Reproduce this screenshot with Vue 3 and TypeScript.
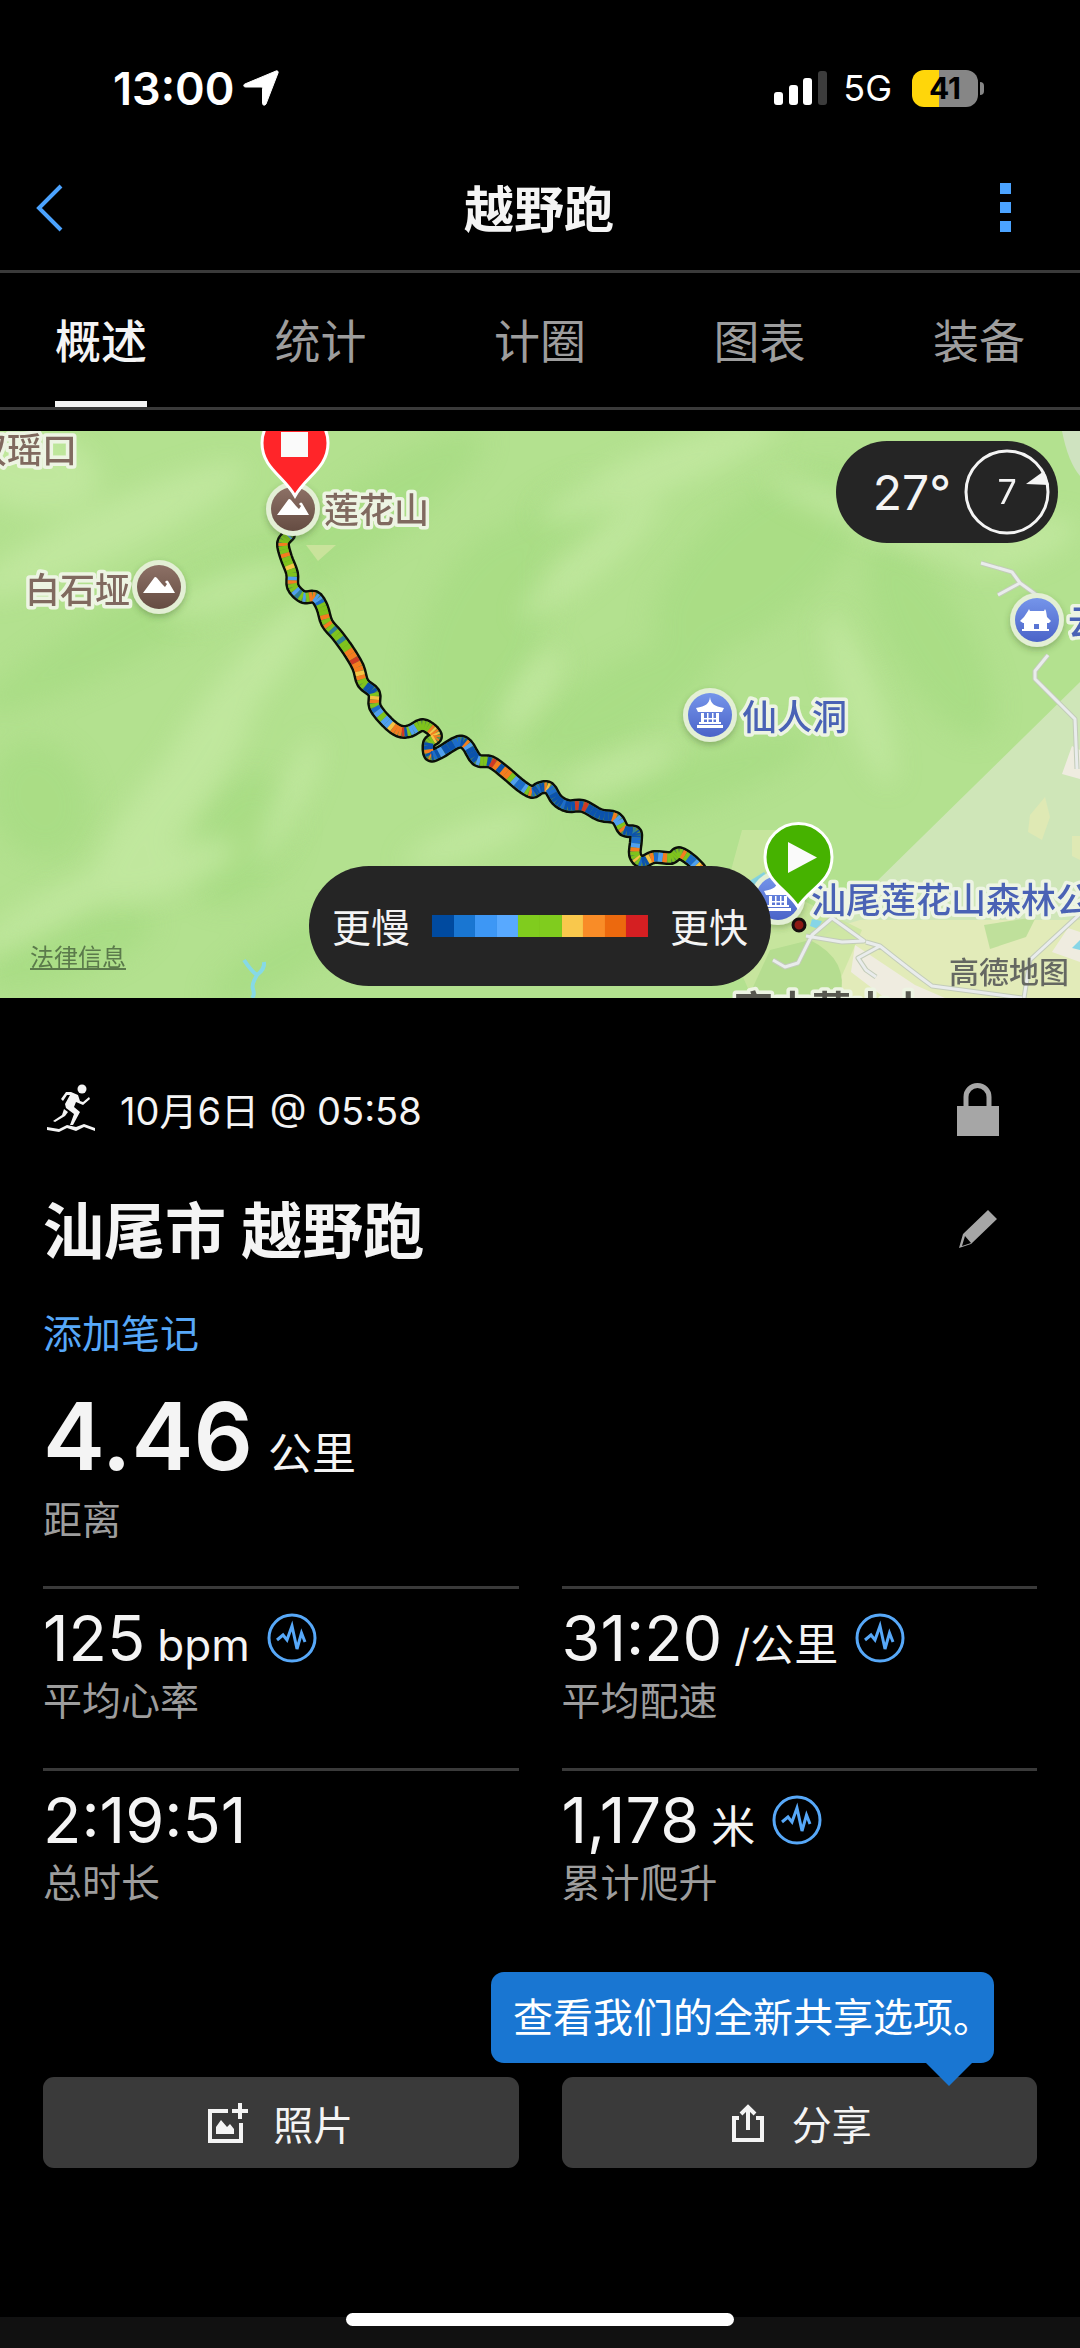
<script setup lang="ts">
import { ref } from 'vue'

interface Stat {
  value: string
  unit?: string
  label: string
  chart: boolean
}

type Point = [number, number]

const tabs = ['概述', '统计', '计圈', '图表', '装备']
const activeTab = ref('概述')

const stats: Stat[] = [
  { value: '125', unit: 'bpm', label: '平均心率', chart: true },
  { value: '31:20', unit: '/公里', label: '平均配速', chart: true },
  { value: '2:19:51', label: '总时长', chart: false },
  { value: '1,178', unit: '米', label: '累计爬升', chart: true },
]

const paceScale = [
  '#004a9f', '#1976d2', '#3d97f5', '#58a9ff', '#80cc1e',
  '#80cc1e', '#f9c84c', '#f98c27', '#ec690e', '#d51f22',
]

const route: Point[] = [
  [289, 535], [283, 543], [286, 557], [292, 573], [293, 587], [303, 597], [315, 597], [322, 607],
  [327, 623], [337, 635], [348, 650], [358, 667], [363, 683], [374, 693], [375, 707], [387, 722],
  [399, 731], [410, 731], [422, 725], [432, 730], [436, 737], [429, 743], [430, 755], [439, 753],
  [458, 742], [467, 745], [477, 760], [491, 762], [506, 773], [520, 785], [532, 792], [540, 788],
  [549, 788], [557, 800], [568, 806], [583, 806], [600, 815], [616, 818], [624, 830], [635, 832],
  [636, 840], [635, 855], [642, 862], [654, 857], [671, 858], [679, 853], [691, 860], [700, 869],
]

const palette: Record<string, string> = {
  g: '#7fc31c', l: '#4f9ff0', b: '#0b52ad', o: '#f57c1f', y: '#f6c343', r: '#cf3a24', t: '#2f7f9a', m: '#1c6ccb',
}

// Four pace samples for each stretch between two route points.
const pace = [
  'lggg', 'oggo', 'ggyg', 'glog', 'gltg', 'lgoo', 'llmg', 'ggog',
  'ogtg', 'gtgg', 'ooro', 'oyog', 'gbbb', 'gyog', 'mlgl', 'lyoo',
  'orbg', 'llgg', 'gggo', 'yoyo', 'oygg', 'bbob', 'obmb', 'lbbm',
  'mbbo', 'lbbb', 'lggb', 'robo', 'oglm', 'mlgo', 'mbbm', 'bboy',
  'mmbb', 'bbmb', 'bbrb', 'rbbb', 'bbbo', 'llgo', 'bbbt', 'bbbm',
  'mlog', 'gygm', 'bbyo', 'mlog', 'gggg', 'gogm', 'mlyo', 'oygg',
]

function curve(a: number, b: number, c: number, d: number, t: number): number {
  return 0.5 * (2 * b + (c - a) * t + (2 * a - 5 * b + 4 * c - d) * t * t + (3 * b - a - 3 * c + d) * t * t * t)
}

const track: Point[] = []
const colors: string[] = []
for (let i = 0; i < route.length - 1; i++) {
  const p0 = route[Math.max(i - 1, 0)]
  const p1 = route[i]
  const p2 = route[i + 1]
  const p3 = route[Math.min(i + 2, route.length - 1)]
  for (let k = 0; k < 4; k++) {
    const t = k / 4
    track.push([curve(p0[0], p1[0], p2[0], p3[0], t), curve(p0[1], p1[1], p2[1], p3[1], t)])
    colors.push(palette[pace[i][k]])
  }
}
track.push(route[route.length - 1])

const routePoints = track.map((p) => p.join(',')).join(' ')
const segments = track.slice(1).map((end, i) => ({
  x1: track[i][0], y1: track[i][1], x2: end[0], y2: end[1], color: colors[i],
}))

const darkPatches = [
  [360, 520, 150, 34, -35], [150, 620, 190, 30, -28], [480, 640, 120, 60, -70], [760, 560, 130, 60, -40],
  [620, 700, 110, 36, -30], [70, 950, 90, 28, -20], [240, 840, 70, 50, -60], [930, 640, 110, 40, 60],
  [560, 520, 60, 30, -30], [700, 780, 120, 26, -20], [40, 800, 60, 50, 70], [280, 960, 80, 24, -30],
]
const lightPatches = [
  [110, 530, 150, 26, -25], [30, 470, 70, 40, 10], [660, 470, 130, 22, -22], [240, 690, 120, 22, -50],
  [170, 800, 130, 30, -52], [60, 905, 100, 16, -28], [170, 870, 70, 22, -20], [530, 690, 50, 16, -55],
  [590, 560, 90, 16, -40], [880, 520, 120, 16, 20], [860, 700, 90, 18, 70], [620, 770, 60, 14, -20],
  [290, 800, 70, 14, -65], [470, 840, 70, 16, -20], [1020, 545, 60, 20, -20], [230, 590, 70, 18, -20],
]
</script>

<template>
  <div class="screen">
    <div class="status">
      <div class="status-left">
        <span class="clock">13:00</span>
        <svg class="locator" viewBox="0 0 36 36" aria-hidden="true">
          <path d="M33 1c1.500-.6 2.600.6 2 2L23 34c-.8 1.800-3.500 1.400-3.500-.5V18.500c0-1-.6-1.500-1.500-1.500H2.500c-2 0-2.400-2.200-.6-3z" fill="#fff" stroke="#fff" stroke-linejoin="round" />
        </svg>
      </div>
      <div class="status-right">
        <svg class="signal" viewBox="0 0 53 34" aria-hidden="true">
          <rect x="0" y="21" width="9" height="13" rx="3" fill="#fff" />
          <rect x="15" y="14" width="9" height="20" rx="3" fill="#fff" />
          <rect x="29" y="7" width="9" height="27" rx="3" fill="#fff" />
          <rect x="44" y="0" width="9" height="34" rx="3" fill="#3c3c3c" />
        </svg>
        <span class="network">5G</span>
        <div class="battery"><span>41</span></div>
      </div>
    </div>

    <header class="bar">
      <button class="icon-btn" aria-label="返回">
        <svg width="28" height="48" viewBox="0 0 28 48"><path d="M25 2 3 24l22 22" fill="none" stroke="#4ba3ff" stroke-width="4" /></svg>
      </button>
      <h1>越野跑</h1>
      <button class="icon-btn" aria-label="更多">
        <svg width="11" height="50" viewBox="0 0 11 50" fill="#4ba3ff">
          <rect width="11" height="11" /><rect y="19" width="11" height="11" /><rect y="38" width="11" height="11" />
        </svg>
      </button>
    </header>

    <nav class="tabs">
      <button
        v-for="tab in tabs"
        :key="tab"
        :class="['tab', { active: tab === activeTab }]"
        @click="activeTab = tab"
      >{{ tab }}</button>
    </nav>

    <section class="map">
      <svg class="map-canvas" viewBox="0 431 1080 567" preserveAspectRatio="xMidYMid slice">
        <defs>
          <filter id="soft" x="-30%" y="-60%" width="160%" height="220%"><feGaussianBlur stdDeviation="13" /></filter>
          <filter id="shade" x="-30%" y="-30%" width="160%" height="170%">
            <feDropShadow dx="0" dy="3" stdDeviation="3" flood-color="#3d5a2c" flood-opacity="0.35" />
          </filter>
          <linearGradient id="brown" x1="0" y1="0" x2="0" y2="1"><stop stop-color="#8d7166" /><stop offset="1" stop-color="#654c42" /></linearGradient>
          <linearGradient id="blue" x1="0" y1="0" x2="0" y2="1"><stop stop-color="#7595ea" /><stop offset="1" stop-color="#4a63c8" /></linearGradient>
          <g id="peak">
            <circle r="27" fill="#e3efd5" filter="url(#shade)" />
            <circle r="22" fill="url(#brown)" />
            <path d="M-16 6-5-9q1-2 3 0L3-3 6 0l2-3-2-2 1-1q1-1 2 0L16 6z" fill="#fff" />
          </g>
          <g id="badge">
            <circle r="27" fill="#e3efd5" filter="url(#shade)" />
            <circle r="22" fill="url(#blue)" />
          </g>
          <g id="pagoda" fill="#fff">
            <path d="M0-17c1 7 4 9 14 11l-2 4h-24l-2-4c10-2 13-4 14-11z" />
            <path d="M-9-1h3V9h-3zM6-1h3V9H6zM-3-1h1.500V9H-3zM2-1h1.500V9H2zM-8 4H8v1.500H-8zM-11 8h22v2h-22zM-13 11h26v3h-26z" />
          </g>
        </defs>

        <rect y="431" width="1080" height="567" fill="#b3e18f" />
        <g filter="url(#soft)" fill="#a6db82" opacity="0.7">
          <ellipse v-for="(p, i) in darkPatches" :key="i" :rx="p[2]" :ry="p[3]" :transform="`translate(${p[0]} ${p[1]}) rotate(${p[4]})`" />
        </g>
        <g filter="url(#soft)" fill="#c6eaa4" opacity="0.7">
          <ellipse v-for="(p, i) in lightPatches" :key="i" :rx="p[2]" :ry="p[3]" :transform="`translate(${p[0]} ${p[1]}) rotate(${p[4]})`" />
        </g>

        <path d="M1080 682 870 888l-130 110h340z" fill="#cfe6b8" />
        <path d="M860 920h220v78H800q-10-60 60-78z" fill="#e2ebb9" />
        <path d="M742 830h40l20 70 60 30-30 68h-80l-34-80z" fill="#cbe6a0" opacity="0.8" />
        <path d="M770 950l40-10q40 20 30 58h-92z" fill="#b5dd90" />
        <path d="M984 925l52-8-10 20-36 12z" fill="#bfe09b" />
        <path d="M1062 431h18v45q-12-14-18-45z" fill="#cfe3c0" />
        <path d="M306 545h30l-18 16z" fill="#c9e39b" />
        <path d="M1072 746l8 4v29l-18-5zM855 945l60 40 30 13h-60l-34-26zM1068 928l12 4v30l-28-10z" fill="#efece0" />
        <path d="M1030 815l15-18 5 20-8 23-14-8zM1072 836h8v24l-8-4z" fill="#dfe9b4" />
        <path d="M748 882l16-10 4 6-12 10zM812 919l10 2-4 8-8-3zM1072 948l8-8v10z" fill="#86d5e6" />
        <path d="M244 960q8 12 13 15 8-6 7-13M257 975q-6 10-4 14 2 6-1 9" fill="none" stroke="#86d9e6" stroke-width="4" />

        <g fill="none" stroke="#c3ccb9" stroke-linejoin="round" stroke-width="5">
          <path d="M981 563l31 9 8 11 18 13M1020 583l-22 12M1048 655l-13 16v8l40 40 2 50M806 936l36 6 22-1-32-23-20 17-14 28-13 4-12-7M866 942l14 4q30 24 52 40l90 12M880 946l-22 12 8 12 10 7M1080 914l-50 46-6 38" />
        </g>
        <g fill="none" stroke="#e9ecec" stroke-linejoin="round" stroke-width="3">
          <path d="M981 563l31 9 8 11 18 13M1020 583l-22 12M1048 655l-13 16v8l40 40 2 50M806 936l36 6 22-1-32-23-20 17-14 28-13 4-12-7M866 942l14 4q30 24 52 40l90 12M880 946l-22 12 8 12 10 7M1080 914l-50 46-6 38" />
        </g>

        <g fill="none" stroke-linejoin="round" stroke-linecap="round">
          <polyline :points="routePoints" stroke="#0b0f08" stroke-width="14" />
          <polyline :points="routePoints" stroke="#5c8f4a" stroke-width="9" />
        </g>
        <g stroke-width="9">
          <line v-for="(s, i) in segments" :key="i" :x1="s.x1" :y1="s.y1" :x2="s.x2" :y2="s.y2" :stroke="s.color" />
        </g>

        <use href="#peak" x="293" y="509" />
        <use href="#peak" x="159" y="587" />
        <use href="#badge" x="710" y="715" /><use href="#pagoda" x="710" y="714" />
        <use href="#badge" x="1037" y="620" />
        <path d="M1028 611l1-2 1 2h14l1-2 1 2 1 6 4 4-2 2h-2v6h2v2h-27v-2h2v-6h-1l-3-2 4-4zM1034 624v5h5v-5z" fill="#fff" fill-rule="evenodd" />
        <use href="#badge" x="778" y="898" /><use href="#pagoda" x="778" y="897" />
        <circle cx="799" cy="925" r="6" fill="#8c1a15" stroke="#161010" stroke-width="3" />

        <g class="places" font-size="35">
          <text x="-28" y="463" fill="#80695f">双瑶口</text>
          <text x="25" y="603" fill="#80695f">白石垭</text>
          <text x="324" y="523" fill="#80695f">莲花山</text>
          <text x="742" y="730" fill="#4a62b5">仙人洞</text>
          <text x="1068" y="635" fill="#4a62b5">云</text>
          <text x="811" y="913" fill="#4a62b5">汕尾莲花山森林公</text>
        </g>
        <g class="places town"><text x="734" y="1024" font-size="39" fill="#57574f">高中莲山上</text></g>

        <path d="M295 496C284 476 262 468 262 443a33 33 0 0 1 66 0c0 25-22 33-33 53z" fill="#ff2529" stroke="#fff" stroke-width="3" />
        <rect x="281" y="432" width="27" height="25" fill="#fafafa" />
        <path d="M798 907C787 889 765 882 765 857a33.500 33.500 0 0 1 67 0c0 25-23 32-34 50z" fill="#46b200" stroke="#fff" stroke-width="3" />
        <path d="M788 842v31l29-15.500z" fill="#fafafa" />
      </svg>

      <div class="weather">
        <span class="temp">27°</span>
        <div class="wind">
          <svg viewBox="0 0 86 86" aria-hidden="true">
            <circle cx="43" cy="43" r="41" fill="none" stroke="#f4f4f4" stroke-width="3" />
            <path d="M62 35 80 22l5 14z" fill="#f4f4f4" />
          </svg>
          <span>7</span>
        </div>
      </div>

      <div class="pace">
        <span>更慢</span>
        <div class="scale"><i v-for="(c, i) in paceScale" :key="i" :style="{ background: c }"></i></div>
        <span>更快</span>
      </div>

      <a class="legal" href="#">法律信息</a>
      <span class="provider">高德地图</span>
    </section>

    <main>
      <div class="row when">
        <svg class="runner" viewBox="0 0 50 50" fill="#f4f4f4" aria-hidden="true">
          <circle cx="36" cy="5" r="4.500" />
          <path d="M15 15l5-7h5l7 3 2 6 3 1 6-5 1 2-7 6-7-3-2 5 6 5-7 13h-3l4-11-8-6-1-4 5-9h-3l-4 6z" />
          <path d="M18 25l4 3-3 4-10 6-2-1 9-6zM1 43l12 2 8-4 9 2 8-3 11 4v3l-11-4-8 4-9-3-8 4-12-2z" />
        </svg>
        <span class="date">10月6日 @ 05:58</span>
        <button class="tool" aria-label="隐私">
          <svg width="42" height="54" viewBox="0 0 42 54">
            <path d="M9 26V15a11.500 11.500 0 0 1 23 0v11" fill="none" stroke="#a6a6a6" stroke-width="5" />
            <path d="M0 24h42v30H0z" fill="#a6a6a6" />
          </svg>
        </button>
      </div>
      <div class="row title">
        <h2>汕尾市 越野跑</h2>
        <button class="tool" aria-label="编辑">
          <svg width="42" height="40" viewBox="0 0 42 40">
            <path fill-rule="evenodd" d="M31 1l9 9-26 25L2 39 6 25zM8 27l-3 10 9-3z" fill="#a6a6a6" />
          </svg>
        </button>
      </div>
      <a class="note" href="#">添加笔记</a>

      <div class="distance"><strong>4.46</strong><span>公里</span></div>
      <div class="label">距离</div>

      <div class="stats">
        <div v-for="s in stats" :key="s.label" class="stat">
          <div class="reading">
            <div class="figure"><b>{{ s.value }}</b><span v-if="s.unit">{{ s.unit }}</span></div>
            <button v-if="s.chart" class="chart" :aria-label="s.label + '图表'">
              <svg width="50" height="50" viewBox="0 0 50 50" fill="none" stroke="#57a8f8">
                <circle cx="25" cy="25" r="23" stroke-width="3" />
                <path d="M10 27l6-5 4 5 5-14 5 23 4.500-16 3.500 9" stroke-width="3" />
              </svg>
            </button>
          </div>
          <div class="label">{{ s.label }}</div>
        </div>
      </div>

      <div class="actions">
        <button class="action">
          <svg width="40" height="40" viewBox="0 0 40 40">
            <path d="M20 8H2v30h31V20" fill="none" stroke="#f4f4f4" stroke-width="4" />
            <path d="M32 0v16M24 8h16" stroke="#f4f4f4" stroke-width="4" />
            <path d="M8 31v-7l5-7 6 7 3-3 4 5v5z" fill="#f4f4f4" />
          </svg>
          照片
        </button>
        <button class="action">
          <svg width="40" height="40" viewBox="0 0 40 40" fill="none" stroke="#f4f4f4">
            <path d="M12 15H7v22h28V15h-6" stroke-width="4" />
            <path d="M21 27V4M14 11l7-7 7 7" stroke-width="4" />
          </svg>
          分享
        </button>
        <div class="tip" role="tooltip">查看我们的全新共享选项。</div>
      </div>
    </main>

    <footer><div class="home"></div></footer>
  </div>
</template>

<style>
body {
  background: #000;
}
</style>

<style scoped>
.screen {
  min-height: 100vh;
  display: flex;
  flex-direction: column;
  overflow: hidden;
  background: #000;
  color: #f4f4f4;
  font-family: Inter, "Noto Sans CJK SC", sans-serif;
}

button {
  border: 0;
  padding: 0;
  background: none;
  color: inherit;
  font: inherit;
}

svg {
  display: block;
}

h1,
h2 {
  margin: 0;
}

.status {
  display: flex;
  justify-content: space-between;
  align-items: center;
  box-sizing: border-box;
  height: 146px;
  padding: 30px 102px 0 113px;
  color: #fff;
}

.status-left,
.status-right {
  display: flex;
  align-items: center;
}

.clock {
  font-size: 45px;
  font-weight: 600;
}

.locator {
  width: 36px;
  height: 36px;
  margin-left: 9px;
}

.signal {
  width: 53px;
  height: 34px;
}

.network {
  margin: 0 20px 0 16px;
  font-size: 36px;
}

.battery {
  position: relative;
  width: 66px;
  height: 37px;
  border-radius: 12px;
  background: linear-gradient(90deg, #ffd60a 41%, #868686 41%);
  color: #000;
  font-size: 30px;
  font-weight: 700;
  line-height: 37px;
  text-align: center;
}

.battery::after {
  content: "";
  position: absolute;
  right: -6px;
  top: 12px;
  width: 4px;
  height: 13px;
  border-radius: 0 4px 4px 0;
  background: #868686;
}

.bar {
  display: flex;
  align-items: center;
  justify-content: space-between;
  height: 124px;
  padding: 0 38px 0 36px;
  border-bottom: 3px solid #3a3a3a;
}

.bar h1 {
  padding-bottom: 4px;
  font-size: 50px;
  font-weight: 600;
}

.icon-btn {
  display: flex;
  width: 74px;
}

.icon-btn:last-child {
  justify-content: center;
}

.tabs {
  display: flex;
  justify-content: space-between;
  height: 134px;
  padding: 0 55px;
  border-bottom: 3px solid #3a3a3a;
}

.tab {
  padding-bottom: 5px;
  border-top: 6px solid transparent;
  border-bottom: 6px solid transparent;
  color: #9d9d9d;
  font-size: 46px;
}

.tab.active {
  border-bottom-color: #f4f4f4;
  color: #f4f4f4;
  font-weight: 500;
}

.map {
  position: relative;
  margin-top: 21px;
}

.map-canvas {
  width: 100%;
  height: auto;
}

.places {
  paint-order: stroke;
  stroke: #edf4e3;
  stroke-width: 7px;
  stroke-linejoin: round;
  font-weight: 500;
}

.town {
  font-weight: 700;
}

.weather {
  position: absolute;
  top: 10px;
  right: 22px;
  display: flex;
  align-items: center;
  gap: 13px;
  height: 102px;
  padding: 0 8px 0 37px;
  border-radius: 51px;
  background: #252525;
}

.temp {
  font-size: 48px;
}

.wind {
  position: relative;
  width: 86px;
  height: 86px;
  font-size: 34px;
  line-height: 86px;
  text-align: center;
}

.wind svg {
  position: absolute;
  inset: 0;
}

.pace {
  position: absolute;
  bottom: 12px;
  left: 50%;
  transform: translateX(-50%);
  display: flex;
  align-items: center;
  gap: 22px;
  height: 120px;
  padding: 0 23px;
  border-radius: 60px;
  background: #252525;
  font-size: 39px;
  white-space: nowrap;
}

.pace span {
  padding-bottom: 3px;
}

.scale {
  display: flex;
  width: 216px;
  height: 22px;
}

.scale i {
  flex: 1;
}

.legal {
  position: absolute;
  left: 30px;
  bottom: 24px;
  color: #5b7a4b;
  font-size: 24px;
  line-height: 32px;
}

.provider {
  position: absolute;
  right: 11px;
  bottom: 8px;
  color: #656862;
  font-size: 30px;
  font-weight: 500;
  line-height: 36px;
}

main {
  padding: 75px 43px 0;
}

.row {
  display: flex;
  align-items: center;
}

.when {
  height: 72px;
}

.runner {
  width: 50px;
  height: 50px;
  margin: 0 24px 0 3px;
}

.date {
  padding-bottom: 2px;
  font-size: 38px;
}

.tool {
  display: flex;
  margin-left: auto;
  margin-right: 38px;
}

.title {
  height: 84px;
  margin-top: 42px;
}

.title h2 {
  padding-bottom: 4px;
  font-size: 61px;
  font-weight: 600;
}

.note {
  display: block;
  margin-top: 39px;
  color: #57a8f8;
  font-size: 39px;
  line-height: 48px;
  text-decoration: none;
}

.distance {
  display: flex;
  align-items: baseline;
  gap: 15px;
  height: 120px;
  margin-top: 18px;
  font-size: 44px;
  line-height: 120px;
}

.distance strong {
  font-size: 93px;
  font-weight: 600;
}

.label {
  color: #9d9d9d;
  font-size: 39px;
  line-height: 48px;
}

.stats {
  display: grid;
  grid-template-columns: 1fr 1fr;
  column-gap: 43px;
  margin-top: 42px;
}

.stat {
  height: 162px;
  padding-top: 17px;
  border-top: 3px solid #3a3a3a;
}

.reading {
  display: flex;
  align-items: center;
  gap: 17px;
  height: 64px;
  margin-bottom: 7px;
}

.figure {
  display: flex;
  align-items: baseline;
  gap: 12px;
  font-size: 44px;
  line-height: 40px;
}

.figure b {
  font-size: 63px;
  font-weight: 400;
  line-height: 64px;
}

.actions {
  position: relative;
  display: grid;
  grid-template-columns: 1fr 1fr;
  column-gap: 43px;
  margin-top: 127px;
}

.action {
  display: flex;
  align-items: center;
  justify-content: center;
  gap: 25px;
  height: 91px;
  border-radius: 11px;
  background: #3a3a3a;
  font-size: 40px;
}

.tip {
  position: absolute;
  right: 43px;
  bottom: 105px;
  padding: 0 1px 0 22px;
  border-radius: 13px;
  background: #1976d2;
  color: #fff;
  font-size: 40px;
  line-height: 91px;
}

.tip::after {
  content: "";
  position: absolute;
  right: 22px;
  top: 100%;
  border: 23px solid transparent;
  border-top-color: #1976d2;
  border-bottom: 0;
}

footer {
  display: flex;
  justify-content: center;
  height: 31px;
  margin-top: auto;
  background: #111;
}

.home {
  width: 36%;
  height: 13px;
  margin-top: -4px;
  border-radius: 7px;
  background: #fff;
}
</style>
